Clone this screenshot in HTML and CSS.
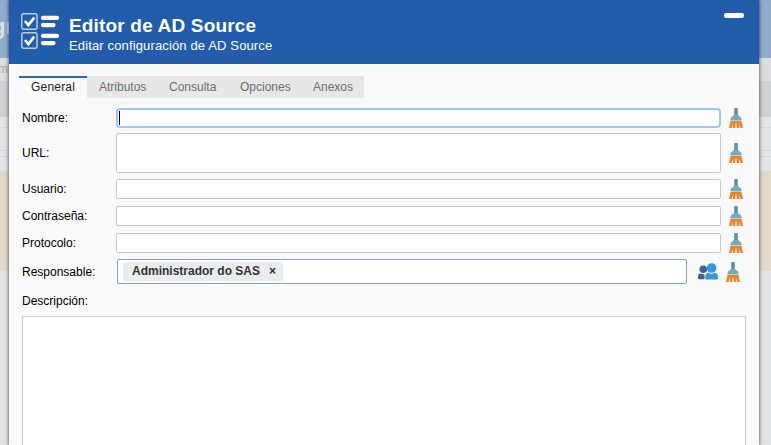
FILE: index.html
```
<!DOCTYPE html>
<html lang="es">
<head>
<meta charset="utf-8">
<title>Editor de AD Source</title>
<link rel="stylesheet" href="styles.css">
</head>
<body>
<svg class="defs" aria-hidden="true">
  <symbol id="brush" viewBox="0 0 14 20">
    <path fill="#5592a8" d="M5.2 1Q5.2 0 6.2 0H7.8Q8.8 0 8.8 1V7H5.2Z"/>
    <path fill="#7ba9b8" d="M5 7H9L11.7 9.2Q12.6 10.3 12.6 12.4H1.4Q1.4 10.3 2.3 9.2Z"/>
    <path fill="#e98427" d="M1.5 13H12.5L14 20H11.5L10.5 15.2L10.3 20H7.8L7.4 15.2H6.6L6.2 20H3.8L4 15.2L2.6 20H0Z"/>
  </symbol>
</svg>
<div class="page">
  <div class="page-title">gr</div>
  <div class="page-menu">mp</div>
  <div class="page-bar"></div>
  <div class="page-line"></div>
  <div class="page-line second"></div>
  <div class="page-line third"></div>
  <div class="page-note"></div>
</div>
<main class="dialog">
  <header class="header">
    <svg class="checks" viewBox="0 0 40 38" fill="none">
      <g stroke="#b9d0eb" stroke-width="1.4"><rect x="1.8" y="1.8" width="15.2" height="15.4" rx="2"/><rect x="1.8" y="20.8" width="15.2" height="15.4" rx="2"/></g>
      <g stroke="#fff" stroke-width="2.7"><path d="M5 9L8.4 13L14.2 5.7M5 28L8.4 32L14.2 24.7"/></g>
      <g stroke="#fff" stroke-width="4.2" stroke-linecap="round"><path d="M23 5.9H37M23 13.1H33.5M23 23.9H37M23 31.1H33.5"/></g>
    </svg>
    <div class="heading"><h1>Editor de AD Source</h1><p>Editar configuración de AD Source</p></div>
    <button class="minimize" aria-label="Minimizar"></button>
  </header>
  <nav class="tabs"><a class="active">General</a><a>Atributos</a><a>Consulta</a><a>Opciones</a><a>Anexos</a></nav>
  <form class="form">
    <div class="row name"><label>Nombre:</label><div class="field focused"><span class="caret"></span></div><svg class="brush"><use href="#brush"/></svg></div>
    <div class="row url"><label>URL:</label><div class="field"></div><svg class="brush"><use href="#brush"/></svg></div>
    <div class="row"><label>Usuario:</label><div class="field"></div><svg class="brush"><use href="#brush"/></svg></div>
    <div class="row"><label>Contraseña:</label><div class="field"></div><svg class="brush"><use href="#brush"/></svg></div>
    <div class="row protocol"><label>Protocolo:</label><div class="field"></div><svg class="brush"><use href="#brush"/></svg></div>
    <div class="row owner"><label>Responsable:</label><div class="field picker"><span class="chip">Administrador do SAS<b>×</b></span></div>
      <svg class="people" viewBox="0 0 20 17"><g fill="#336399"><circle cx="5.3" cy="6.2" r="3.8"/><path d="M0 15V14Q0 10.6 3 10.6L6.5 11.6V16.2H1Q0 16.2 0 15Z"/></g><g fill="#3498db"><path d="M7.2 15.3V14Q7.2 10 10.6 9.8Q13.6 11.6 16.6 9.8Q20 10 20 14V15.3Q20 16.5 18.8 16.5H8.4Q7.2 16.5 7.2 15.3Z"/><circle cx="13.6" cy="5" r="4.8"/></g></svg>
      <svg class="brush"><use href="#brush"/></svg></div>
    <label class="desc-label">Descripción:</label>
    <div class="description"></div>
  </form>
</main>
</body>
</html>
```
FILE: styles.css
```
* { box-sizing: border-box; }
body { margin: 0; height: 445px; overflow: hidden; position: relative; background: #e3e4e7; font: 12px "Liberation Sans", Arial, sans-serif; color: #000; }
.defs { position: absolute; width: 0; height: 0; }
.page-title { height: 58px; background: #92abcd; color: #dde1e8; font-size: 22px; font-weight: bold; line-height: 54px; text-indent: -8px; overflow: hidden; }
.page-menu { height: 23px; background: #dcdddf; color: #aaa; line-height: 23px; text-indent: -2px; }
.page-bar { height: 36px; background: #cfd0d2; }
.page-line { height: 11px; border-bottom: 1px solid #d6d8da; }
.page-line.second { height: 23px; }
.page-line.third { height: 6px; }
.page-note { height: 100px; margin-top: 14px; background: #e3dbc9; }
.dialog { position: absolute; top: 0; left: 9px; width: 750px; height: 445px; background: #f9f9f9; box-shadow: 0 0 4px rgba(0, 0, 0, .75); }
.header { display: flex; height: 64px; padding: 12px 15px 0 11px; background: #225dab; color: #fff; }
.checks { width: 40px; height: 38px; }
.heading { flex: 1; margin-left: 9px; }
.heading h1 { margin: 3px 0 0; font-size: 19px; line-height: 22px; letter-spacing: .17px; }
.heading p { margin: 0; font-size: 13px; line-height: 17px; letter-spacing: .14px; }
.minimize { width: 20px; height: 5px; margin-top: 1px; padding: 0; border: 0; border-radius: 2px; background: #fff; }
.tabs { display: grid; grid-template-columns: 68px 70px 71px 73px 63px; width: 345px; height: 22px; margin: 12px 0 0 10px; background: #e7e7e7; color: #6e6e6e; }
.tabs a { padding-left: 12px; line-height: 22px; }
.tabs .active { border-top: 2px solid #3165a3; background: #f9f9f9; color: #222; line-height: 18px; letter-spacing: .2px; }
.form { display: flex; flex-direction: column; margin: 10px 13px 0; }
.row { display: flex; align-items: center; height: 20px; margin-bottom: 7px; }
.row label { width: 94px; }
.field { width: 605px; height: 20px; border: 1px solid #c9c9c9; border-radius: 2px; background: #fff; }
.focused { padding: 1px; border: 2px solid #a3c3fb; border-radius: 4px; }
.caret { display: block; width: 1px; height: 14px; background: #000; }
.brush { width: 14px; height: 20px; margin-left: 8px; }
.name { margin-bottom: 5px; }
.url { height: 40px; margin-bottom: 6px; }
.url .field { height: 40px; }
.protocol { margin-bottom: 6px; }
.owner { height: 25px; margin-bottom: 9px; }
.owner label { width: 95px; }
.picker { width: 570px; height: 25px; padding: 2px 5px; border-color: #7fa3c9; }
.chip { display: inline-flex; width: 160px; height: 19px; padding: 0 0 0 9px; border-radius: 3px; background: #ebecee; color: #333; font-weight: bold; line-height: 18px; }
.chip b { margin-left: 9px; }
.people { width: 20px; height: 17px; margin-left: 11px; }
.owner .brush { margin-left: 8px; }
.desc-label { height: 16px; line-height: 16px; }
.description { width: 724px; height: 140px; margin-top: 7px; border: 1px solid #d0d0d0; background: #fff; }
```
